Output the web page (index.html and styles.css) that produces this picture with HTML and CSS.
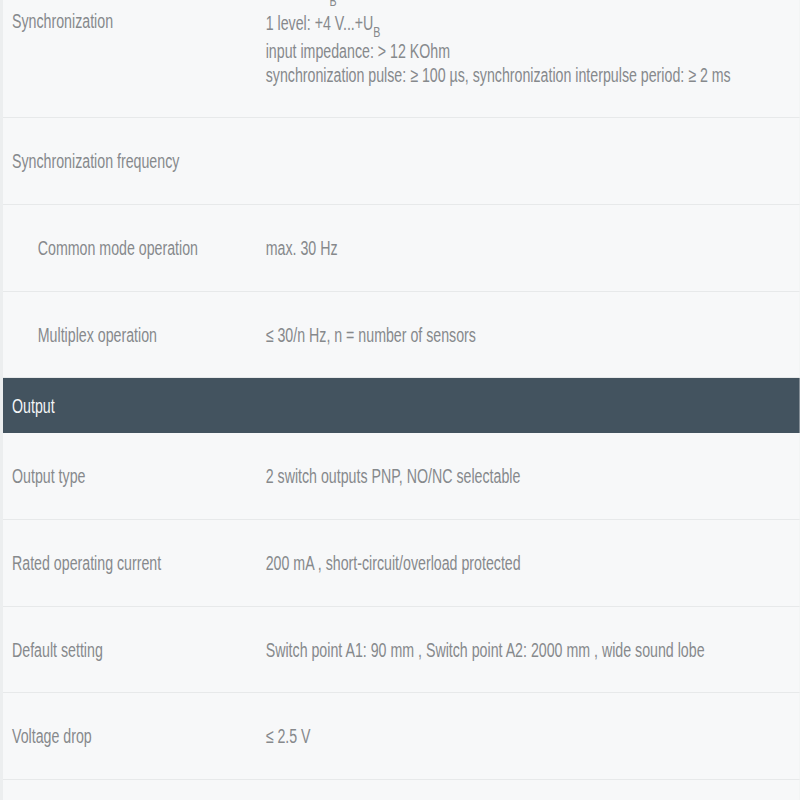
FILE: index.html
```html
<!DOCTYPE html>
<html lang="en">
<head>
<meta charset="utf-8">
<title>Technical data</title>
<link rel="stylesheet" href="styles.css">
</head>
<body>
<div class="sheet">
  <div class="row">
    <div class="label">Synchronization</div>
    <div class="value">
      <div>1 synchronization input</div>
      <div class="spaced">0 level: -U<sub>B</sub>...+1 V</div>
      <div>1 level: +4 V...+U<sub>B</sub></div>
      <div>input impedance: &gt; 12 KOhm</div>
      <div>synchronization pulse: ≥ 100 µs, synchronization interpulse period: ≥ 2 ms</div>
    </div>
  </div>
  <div class="row">
    <div class="label">Synchronization frequency</div>
    <div class="value"></div>
  </div>
  <div class="row">
    <div class="label sub-label">Common mode operation</div>
    <div class="value">max. 30 Hz</div>
  </div>
  <div class="row">
    <div class="label sub-label">Multiplex operation</div>
    <div class="value">≤ 30/n Hz, n = number of sensors</div>
  </div>
  <div class="section">Output</div>
  <div class="row">
    <div class="label">Output type</div>
    <div class="value">2 switch outputs PNP, NO/NC selectable</div>
  </div>
  <div class="row">
    <div class="label">Rated operating current</div>
    <div class="value">200 mA , short-circuit/overload protected</div>
  </div>
  <div class="row">
    <div class="label">Default setting</div>
    <div class="value">Switch point A1: 90 mm , Switch point A2: 2000 mm , wide sound lobe</div>
  </div>
  <div class="row">
    <div class="label">Voltage drop</div>
    <div class="value">≤ 2.5 V</div>
  </div>
  <div class="row">
    <div class="label">Repeat accuracy</div>
    <div class="value">≤ 0.1 % of full-scale value</div>
  </div>
</div>
</body>
</html>
```

FILE: styles.css
```css
html, body {
  margin: 0;
  padding: 0;
  overflow: hidden;
  background: #eceeef;
}

body {
  font-family: "Liberation Sans", Arial, sans-serif;
  font-size: 20px;
  line-height: 24px;
  color: #86898c;
}

.sheet {
  width: 1122px;
  margin-left: 3px;
  margin-top: -74.7px;
  background: #f7f8f9;
  transform: scaleX(0.71);
  transform-origin: 0 0;
}

.row {
  display: grid;
  grid-template-columns: 370px 1fr;
  align-items: center;
  padding: 30.83px 0;
  border-bottom: 1px solid #e7e9ea;
}

.label {
  padding-left: 12.7px;
}

.sub-label {
  padding-left: 49px;
}

.value sub {
  font-size: 0.75em;
  line-height: 1;
  vertical-align: -0.45em;
}

.spaced {
  padding-bottom: 3px;
}

.section {
  background: #43535f;
  color: #f4f6f7;
  padding: 15.5px 0 15.5px 12.7px;
}
```
